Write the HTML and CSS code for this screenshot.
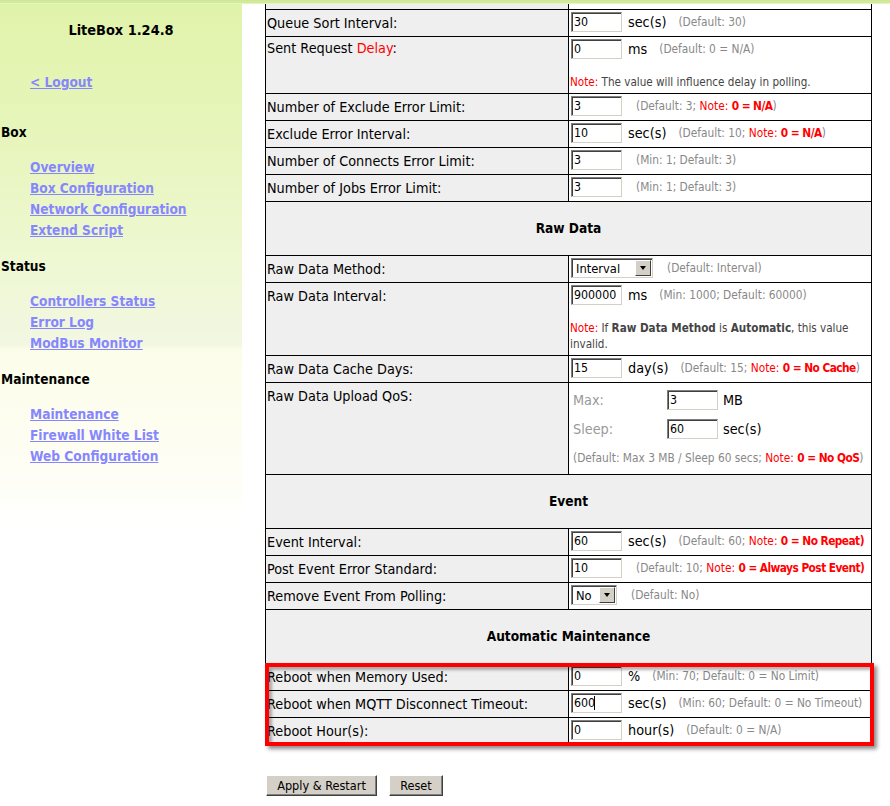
FILE: index.html
```html
<!DOCTYPE html>
<html lang="en">
<head>
<meta charset="utf-8">
<title>LiteBox 1.24.8</title>
<link rel="stylesheet" href="styles.css">
</head>
<body>
<div class="topbar"></div>
<div class="layout">
  <nav class="sidebar">
    <div class="brand">LiteBox 1.24.8</div>
    <div class="logout"><a href="#">&lt; Logout</a></div>

    <h3 class="nav-head">Box</h3>
    <ul class="nav-list">
      <li><a href="#">Overview</a></li>
      <li><a href="#">Box Configuration</a></li>
      <li><a href="#">Network Configuration</a></li>
      <li><a href="#">Extend Script</a></li>
    </ul>

    <h3 class="nav-head">Status</h3>
    <ul class="nav-list">
      <li><a href="#">Controllers Status</a></li>
      <li><a href="#">Error Log</a></li>
      <li><a href="#">ModBus Monitor</a></li>
    </ul>

    <h3 class="nav-head">Maintenance</h3>
    <ul class="nav-list">
      <li><a href="#">Maintenance</a></li>
      <li><a href="#">Firewall White List</a></li>
      <li><a href="#">Web Configuration</a></li>
    </ul>
  </nav>

  <main class="main">
    <div class="table-wrap">
      <table class="cfg">
        <colgroup><col class="col-lbl"><col class="col-val"></colgroup>
        <tbody>
          <tr class="stub"><td class="lbl"></td><td class="val"></td></tr>

          <tr>
            <td class="lbl">Queue Sort Interval:</td>
            <td class="val"><div class="line"><input class="txt" type="text" value="30"><span class="unit">sec(s)</span><span class="hint">(Default: 30)</span></div></td>
          </tr>
          <tr>
            <td class="lbl lbl-tight">Sent Request <span class="red">Delay</span>:</td>
            <td class="val">
              <div class="line"><input class="txt" type="text" value="0"><span class="unit">ms</span><span class="hint">(Default: 0 = N/A)</span></div>
              <div class="note"><span class="red">Note:</span> The value will influence delay in polling.</div>
            </td>
          </tr>
          <tr>
            <td class="lbl">Number of Exclude Error Limit:</td>
            <td class="val"><div class="line"><input class="txt" type="text" value="3"><span class="hint hint-solo">(Default: 3; <span class="red">Note: <b>0 = N/A</b></span>)</span></div></td>
          </tr>
          <tr>
            <td class="lbl">Exclude Error Interval:</td>
            <td class="val"><div class="line"><input class="txt" type="text" value="10"><span class="unit">sec(s)</span><span class="hint">(Default: 10; <span class="red">Note: <b>0 = N/A</b></span>)</span></div></td>
          </tr>
          <tr>
            <td class="lbl">Number of Connects Error Limit:</td>
            <td class="val"><div class="line"><input class="txt" type="text" value="3"><span class="hint hint-solo">(Min: 1; Default: 3)</span></div></td>
          </tr>
          <tr>
            <td class="lbl">Number of Jobs Error Limit:</td>
            <td class="val"><div class="line"><input class="txt" type="text" value="3"><span class="hint hint-solo">(Min: 1; Default: 3)</span></div></td>
          </tr>

          <tr class="section"><th colspan="2">Raw Data</th></tr>

          <tr>
            <td class="lbl">Raw Data Method:</td>
            <td class="val"><div class="line"><span class="sel sel-wide"><select><option>Interval</option><option>Automatic</option></select><span class="arrow"></span></span><span class="hint hint-solo">(Default: Interval)</span></div></td>
          </tr>
          <tr>
            <td class="lbl">Raw Data Interval:</td>
            <td class="val">
              <div class="line"><input class="txt" type="text" value="900000"><span class="unit">ms</span><span class="hint">(Min: 1000; Default: 60000)</span></div>
              <div class="note"><span class="red">Note:</span> If <b>Raw Data Method</b> is <b>Automatic</b>, this value<br>invalid.</div>
            </td>
          </tr>
          <tr>
            <td class="lbl">Raw Data Cache Days:</td>
            <td class="val"><div class="line"><input class="txt" type="text" value="15"><span class="unit">day(s)</span><span class="hint">(Default: 15; <span class="red">Note: <b>0 = No Cache</b></span>)</span></div></td>
          </tr>
          <tr>
            <td class="lbl">Raw Data Upload QoS:</td>
            <td class="val val-qos">
              <div class="qos">
                <span class="qos-label">Max:</span>
                <span class="qos-field"><input class="txt" type="text" value="3"><span class="qos-unit">MB</span></span>
                <span class="qos-label">Sleep:</span>
                <span class="qos-field"><input class="txt" type="text" value="60"><span class="qos-unit">sec(s)</span></span>
              </div>
              <div class="qos-note">(Default: Max 3 MB / Sleep 60 secs; <span class="red">Note: <b>0 = No QoS</b></span>)</div>
            </td>
          </tr>

          <tr class="section"><th colspan="2">Event</th></tr>

          <tr>
            <td class="lbl">Event Interval:</td>
            <td class="val"><div class="line"><input class="txt" type="text" value="60"><span class="unit">sec(s)</span><span class="hint">(Default: 60; <span class="red">Note: <b>0 = No Repeat)</b></span></span></div></td>
          </tr>
          <tr>
            <td class="lbl">Post Event Error Standard:</td>
            <td class="val"><div class="line"><input class="txt" type="text" value="10"><span class="hint hint-solo">(Default: 10; <span class="red">Note: <b>0 = Always Post Event)</b></span></span></div></td>
          </tr>
          <tr>
            <td class="lbl">Remove Event From Polling:</td>
            <td class="val"><div class="line"><span class="sel sel-narrow"><select><option>No</option><option>Yes</option></select><span class="arrow"></span></span><span class="hint hint-solo">(Default: No)</span></div></td>
          </tr>

          <tr class="section"><th colspan="2">Automatic Maintenance</th></tr>

          <tr>
            <td class="lbl">Reboot when Memory Used:</td>
            <td class="val"><div class="line"><input class="txt" type="text" value="0"><span class="unit">%</span><span class="hint">(Min: 70; Default: 0 = No Limit)</span></div></td>
          </tr>
          <tr>
            <td class="lbl">Reboot when MQTT Disconnect Timeout:</td>
            <td class="val"><div class="line"><span class="focus-wrap"><input class="txt" type="text" value="600"><span class="caret"></span></span><span class="unit">sec(s)</span><span class="hint">(Min: 60; Default: 0 = No Timeout)</span></div></td>
          </tr>
          <tr>
            <td class="lbl">Reboot Hour(s):</td>
            <td class="val"><div class="line"><input class="txt" type="text" value="0"><span class="unit">hour(s)</span><span class="hint">(Default: 0 = N/A)</span></div></td>
          </tr>
        </tbody>
      </table>
      <div class="highlight"></div>
    </div>

    <div class="actions">
      <button class="btn btn-apply" type="button">Apply &amp; Restart</button>
      <button class="btn btn-reset" type="button">Reset</button>
    </div>
  </main>
</div>
</body>
</html>
```
FILE: styles.css
```css
* { box-sizing: border-box; }
html, body { margin: 0; padding: 0; }
body {
  font-family: "DejaVu Sans Condensed", "DejaVu Sans", sans-serif;
  font-size: 14.3px;
  color: #000;
  background: #fff;
  height: 806px;
  overflow: hidden;
}

/* thin header strip across the top */
.topbar {
  position: fixed;
  top: 0; left: 0; right: 0;
  height: 4px;
  background: linear-gradient(#cde894 0, #d3ec9c 3px, #e6f4c2 3px, #e6f4c2 4px);
  z-index: 5;
}

.layout { display: flex; align-items: flex-start; }

/* ---------- sidebar ---------- */
.sidebar {
  flex: none;
  width: 242px;
  height: 806px;
  background: linear-gradient(#e0f3aa 0, #e6f5b9 120px, #eef8d2 260px, #f2f7e2 345px, #fcfde9 350px, #fefef6 480px, #ffffff 530px);
  font-weight: bold;
  font-size: 13.6px;
}
.brand {
  margin-top: 20px;
  text-align: center;
  font-size: 14.4px;
  line-height: 21px;
}
.logout {
  margin-top: 31px;
  padding-left: 30px;
  line-height: 21px;
}
.sidebar a { color: #8686ff; text-decoration: underline; }
.nav-head {
  margin: 15px 0 0;
  padding-left: 1px;
  font-size: 13.6px;
  line-height: 21px;
}
.logout + .nav-head { margin-top: 29px; }
.nav-list {
  list-style: none;
  margin: 14px 0 0;
  padding: 0 0 0 30px;
  line-height: 21px;
}

/* ---------- main ---------- */
.main { flex: 1; padding-left: 23px; }
.table-wrap { position: relative; width: 607px; }

.cfg {
  border-collapse: collapse;
  table-layout: fixed;
  width: 607px;
}
.col-lbl { width: 303px; }
.cfg td, .cfg th { border: 1px solid #000; }

.stub td { height: 9px; padding: 0; }

.lbl {
  background: #efefef;
  vertical-align: top;
  padding: 5px 1px 0;
  line-height: 17px;
  white-space: nowrap;
}
.lbl-tight { padding-top: 3px; }

.val {
  background: #fff;
  vertical-align: top;
  padding: 1px 1px 3px;
}
.line {
  display: flex;
  align-items: center;
  height: 22px;
  white-space: nowrap;
}

.txt {
  width: 51px;
  height: 20px;
  margin: 0 0 0 1px;
  padding: 0 0 0 2px;
  border: 1px solid;
  border-color: #7f7f7f #d4d0c8 #d4d0c8 #7f7f7f;
  box-shadow: inset 1px 1px 0 #404040;
  background: #fff;
  color: #000;
  font-family: inherit;
  font-size: 12.3px;
  outline: none;
}

.unit { margin-left: 6px; }
.hint { margin-left: 12px; color: #888; font-size: 11.8px; }
.hint-solo { margin-left: 14px; }
.red { color: #f00; }
.red b { font-weight: bold; }
.hint b, .qos-note b { letter-spacing: -0.55px; }

.note {
  margin-top: 14px;
  font-size: 11.6px;
  line-height: 16px;
  color: #444;
  white-space: nowrap;
}

.section th {
  background: #efefef;
  font-size: 13.6px;
  font-weight: bold;
  line-height: 17px;
  padding: 18px 0;
  text-align: center;
}

/* fake classic select */
.sel {
  display: inline-flex;
  align-items: stretch;
  height: 20px;
  margin-left: 1px;
  border: 1px solid;
  border-color: #7f7f7f #d4d0c8 #d4d0c8 #7f7f7f;
  box-shadow: inset 1px 1px 0 #404040;
  background: #fff;
}
.sel-wide { width: 82px; }
.sel-narrow { width: 46px; }
.sel select {
  appearance: none;
  -webkit-appearance: none;
  flex: 1;
  min-width: 0;
  border: 0;
  margin: 1px 0 0 1px;
  padding: 0 0 0 3px;
  background: transparent;
  font-family: inherit;
  font-size: 12.8px;
  color: #000;
  outline: none;
}
.arrow {
  flex: none;
  width: 16px;
  margin: 1px 1px 1px 0;
  background: #d4d0c8;
  border: 1px solid;
  border-color: #fff #404040 #404040 #fff;
  display: flex;
  align-items: center;
  justify-content: center;
}
.arrow::after {
  content: "";
  border-left: 3.5px solid transparent;
  border-right: 3.5px solid transparent;
  border-top: 4px solid #000;
}

/* QoS nested block */
.val-qos { padding: 2px 1px 8px 4px; }
.qos {
  display: grid;
  grid-template-columns: 94px auto;
  grid-auto-rows: 29px;
  align-items: center;
}
.qos-label { color: #999; }
.qos-field { display: flex; align-items: center; }
.qos-field .txt { margin-left: 0; }
.qos-unit { margin-left: 5px; }
.qos-note {
  margin-top: 7px;
  font-size: 11.8px;
  line-height: 16px;
  color: #888;
  white-space: nowrap;
}

/* focused input caret */
.focus-wrap { position: relative; display: inline-flex; }
.caret {
  position: absolute;
  left: 24px;
  top: 3px;
  width: 1px;
  height: 14px;
  background: #000;
}

/* red annotation frame over the last three rows */
.highlight {
  position: absolute;
  left: 0;
  right: -2px;
  bottom: -1px;
  height: 83px;
  border: 4px solid #f00;
  box-shadow: 3px 3px 4px rgba(0,0,0,.45), inset 3px 3px 3px rgba(0,0,0,.3);
  pointer-events: none;
}

/* buttons */
.actions {
  display: flex;
  gap: 12px;
  margin-top: 30px;
  padding-left: 1px;
}
.btn {
  height: 21px;
  padding: 0;
  background: #d4d0c8;
  border: 1px solid;
  border-color: #fff #404040 #404040 #fff;
  box-shadow: inset -1px -1px 0 #808080;
  font-family: inherit;
  font-size: 12.6px;
  color: #000;
  border-radius: 0;
  white-space: nowrap;
}
.btn-apply { width: 111px; }
.btn-reset { width: 54px; }
```
